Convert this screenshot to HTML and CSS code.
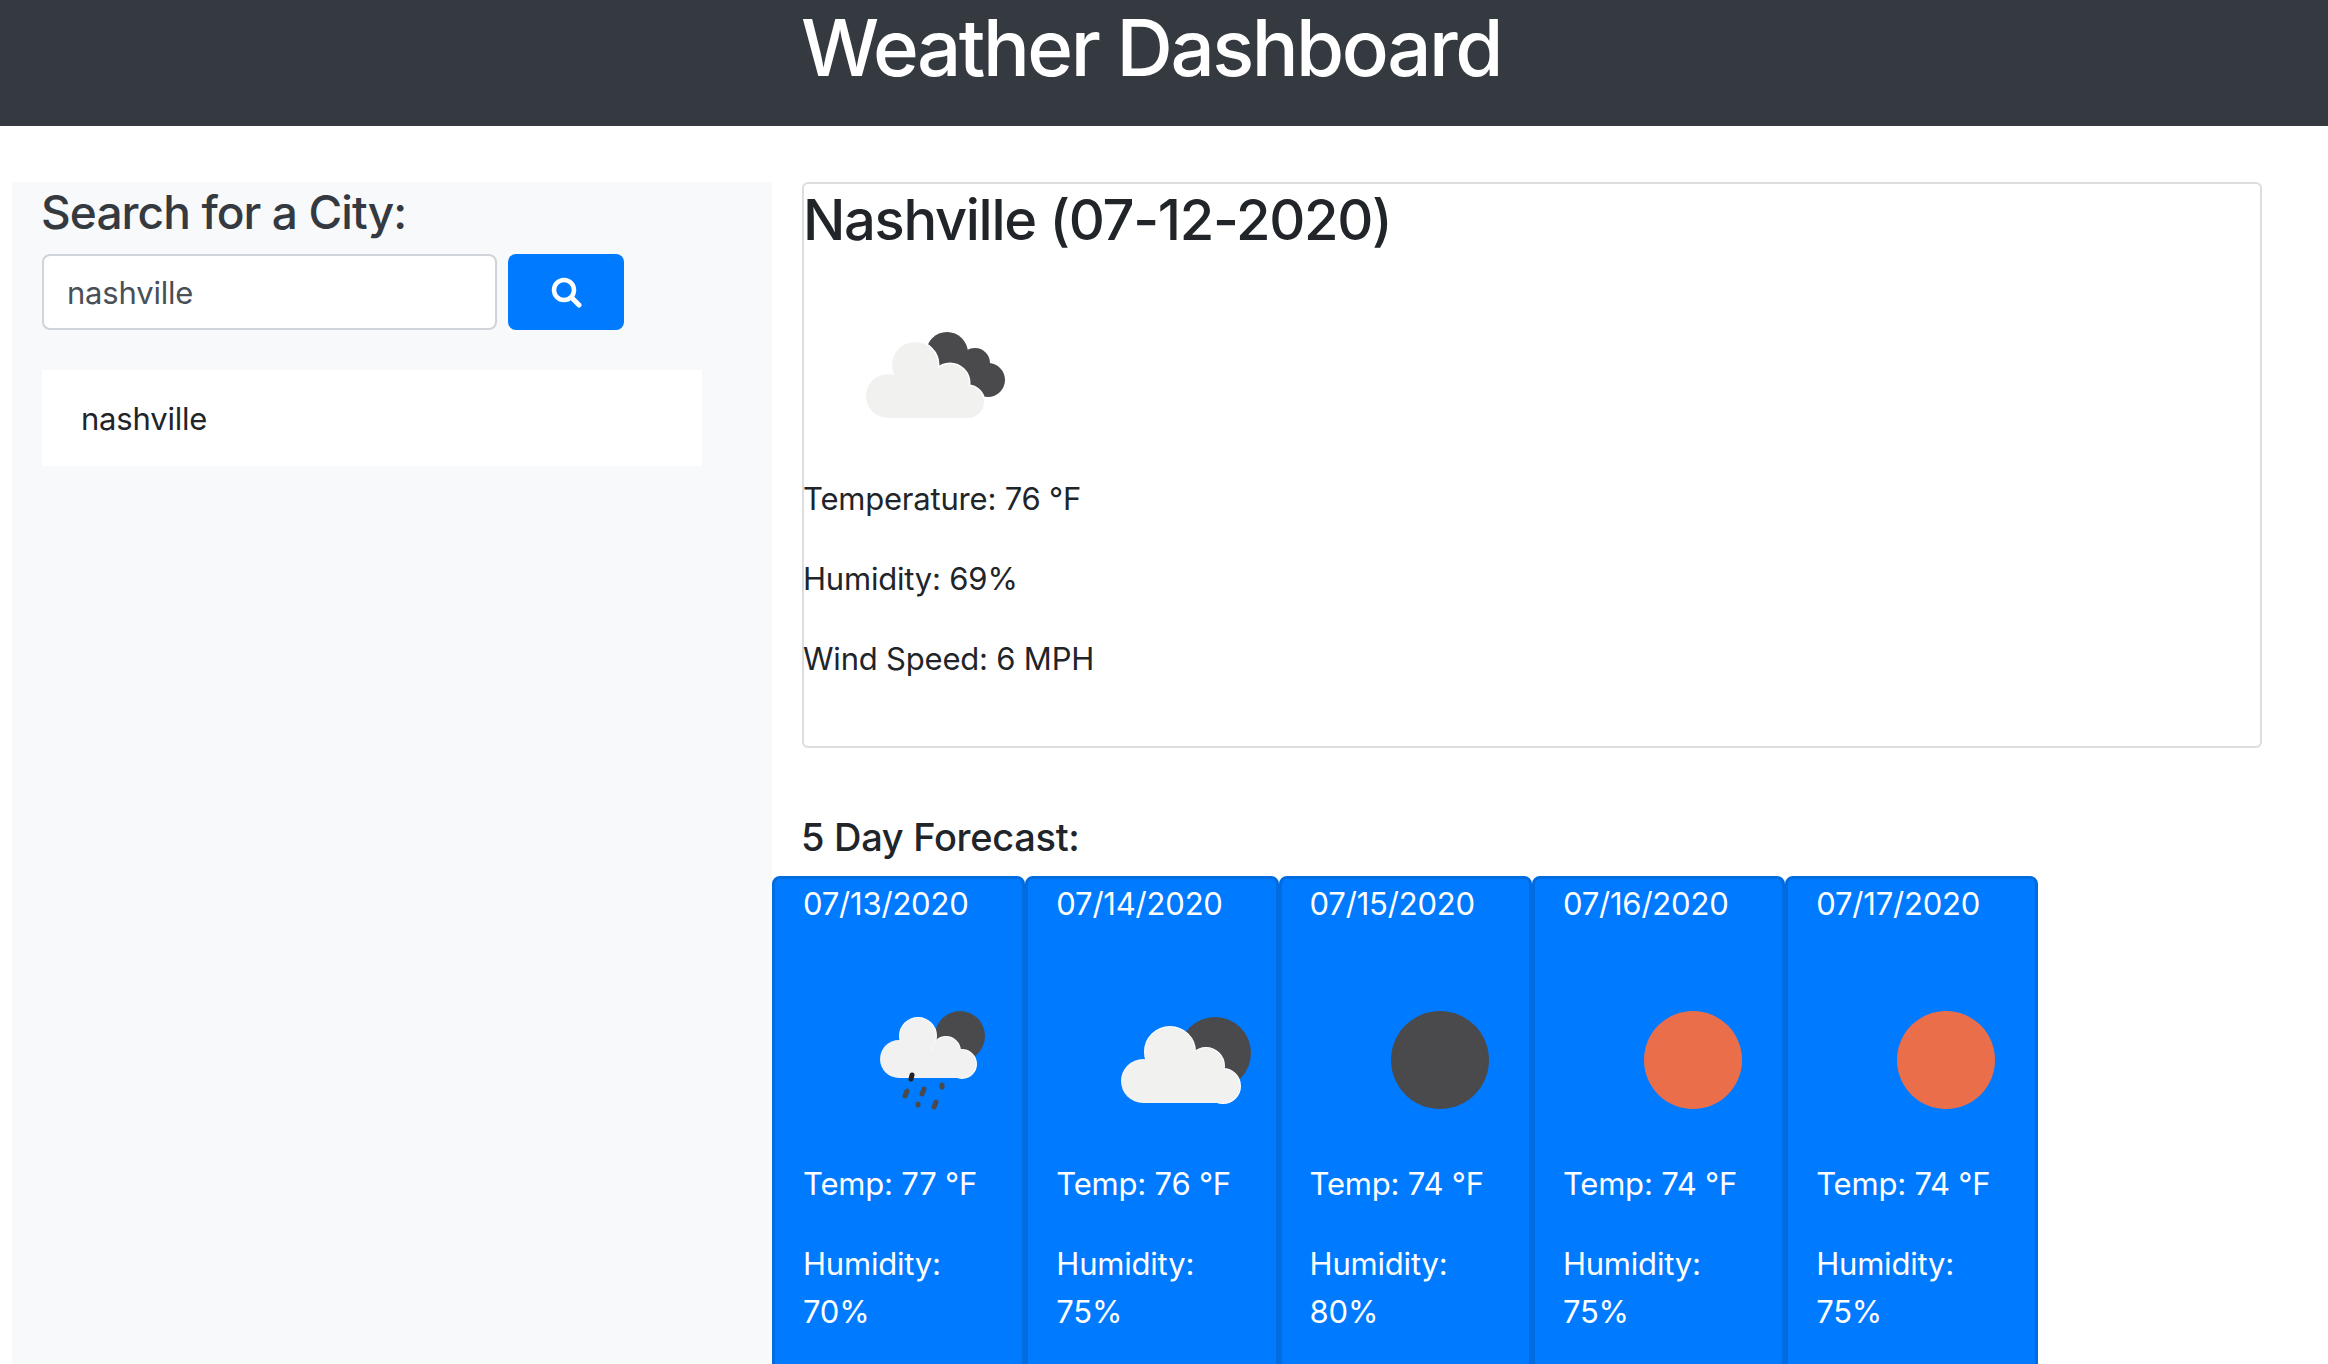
FILE: index.html
```html
<!DOCTYPE html>
<html lang="en">
<head>
  <meta charset="UTF-8" />
  <title>Weather Dashboard</title>
  <link rel="stylesheet" href="styles.css">
</head>
<body>

  <header class="topbar">
    <h1>Weather Dashboard</h1>
  </header>

  <div class="page">
    <aside class="sidebar">
      <h4>Search for a City:</h4>
      <div class="searchRow">
        <input class="cityInput" type="text" value="nashville" />
        <button class="searchBtn" aria-label="Search">
          <svg width="32" height="32" viewBox="0 0 32 32">
            <circle cx="14" cy="14" r="10" fill="none" stroke="#fff" stroke-width="4.5" />
            <line x1="21.5" y1="21.5" x2="29" y2="29" stroke="#fff" stroke-width="5" stroke-linecap="round" />
          </svg>
        </button>
      </div>
      <ul class="history">
        <li>nashville</li>
      </ul>
    </aside>

    <main class="content">
      <section class="current">
        <h2>Nashville (07-12-2020)</h2>
        <svg class="currentIcon" width="150" height="150" viewBox="0 0 150 150">
          <g fill="#4a4a4d">
            <circle cx="86" cy="53" r="21" />
            <circle cx="114" cy="63" r="15" />
            <circle cx="127" cy="80" r="17" />
            <rect x="86" y="55" width="32" height="30" />
            <rect x="100" y="70" width="25" height="25" />
          </g>
          <g fill="#fff" stroke="#fff" stroke-width="3">
            <circle cx="54" cy="65" r="23" />
            <circle cx="89" cy="83" r="19" />
            <circle cx="107" cy="102" r="16" />
          </g>
          <g fill="#f1f1f0">
            <circle cx="54" cy="65" r="23" />
            <circle cx="27" cy="96" r="22" />
            <circle cx="89" cy="83" r="19" />
            <circle cx="107" cy="102" r="16" />
            <rect x="27" y="84" width="80" height="34" />
            <rect x="50" y="70" width="40" height="20" />
          </g>
        </svg>
        <p>Temperature: 76 °F</p>
        <p>Humidity: 69%</p>
        <p>Wind Speed: 6 MPH</p>
      </section>

      <h5 class="forecastTitle">5 Day Forecast:</h5>
      <div class="forecast">

        <div class="dayCard">
          <p>07/13/2020</p>
          <svg class="dayIcon" width="150" height="150" viewBox="0 0 150 150">
            <circle cx="102" cy="51" r="25" fill="#4a4a4d" />
            <g fill="#fff" stroke="#fff" stroke-width="2">
              <circle cx="60" cy="51" r="18" />
              <circle cx="88" cy="66" r="14" />
              <circle cx="104" cy="79" r="14" />
            </g>
            <g fill="#f1f1f1">
              <circle cx="60" cy="51" r="18" />
              <circle cx="41" cy="74" r="19" />
              <circle cx="88" cy="66" r="14" />
              <circle cx="104" cy="79" r="14" />
              <rect x="41" y="64" width="63" height="29" />
            </g>
            <g stroke="#4a4a4d" stroke-width="5" stroke-linecap="round">
              <line x1="54" y1="90" x2="53" y2="94" stroke="#222" />
              <line x1="49" y1="106" x2="47" y2="111" />
              <line x1="66" y1="104" x2="64" y2="109" />
              <line x1="84" y1="100" x2="84" y2="102" />
              <line x1="60" y1="119" x2="60" y2="120" />
              <line x1="78" y1="117" x2="76" y2="122" />
            </g>
          </svg>
          <p>Temp: 77 °F</p>
          <p class="humidity">Humidity: 70%</p>
        </div>

        <div class="dayCard">
          <p>07/14/2020</p>
          <svg class="dayIcon" width="150" height="150" viewBox="0 0 150 150">
            <circle cx="104" cy="68" r="36" fill="#4a4a4d" />
            <g fill="#fff" stroke="#fff" stroke-width="2">
              <circle cx="59" cy="67" r="25" />
              <circle cx="95" cy="81" r="18" />
              <circle cx="112" cy="101" r="17" />
            </g>
            <g fill="#f1f1f0">
              <circle cx="59" cy="67" r="25" />
              <circle cx="32" cy="96" r="22" />
              <circle cx="95" cy="81" r="18" />
              <circle cx="112" cy="101" r="17" />
              <rect x="32" y="80" width="80" height="38" />
            </g>
          </svg>
          <p>Temp: 76 °F</p>
          <p class="humidity">Humidity: 75%</p>
        </div>

        <div class="dayCard">
          <p>07/15/2020</p>
          <svg class="dayIcon" width="150" height="150" viewBox="0 0 150 150">
            <circle cx="75" cy="75" r="49" fill="#4a4a4d" />
          </svg>
          <p>Temp: 74 °F</p>
          <p class="humidity">Humidity: 80%</p>
        </div>

        <div class="dayCard">
          <p>07/16/2020</p>
          <svg class="dayIcon" width="150" height="150" viewBox="0 0 150 150">
            <circle cx="75" cy="75" r="49" fill="#eb6e4b" />
          </svg>
          <p>Temp: 74 °F</p>
          <p class="humidity">Humidity: 75%</p>
        </div>

        <div class="dayCard">
          <p>07/17/2020</p>
          <svg class="dayIcon" width="150" height="150" viewBox="0 0 150 150">
            <circle cx="75" cy="75" r="49" fill="#eb6e4b" />
          </svg>
          <p>Temp: 74 °F</p>
          <p class="humidity">Humidity: 75%</p>
        </div>

      </div>
    </main>
  </div>

</body>
</html>
```

FILE: styles.css
```css
* {
  box-sizing: border-box;
}

html,
body {
  height: 100%;
}

body {
  margin: 0;
  overflow: hidden;
  font-family: Inter, "Liberation Sans", sans-serif;
  font-size: 31px;
  letter-spacing: -0.2px;
  line-height: 48px;
  color: #212529;
  background-color: #fff;
}

.topbar {
  height: 126px;
  background-color: #343a40;
  color: #fff;
  text-align: center;
}

.topbar h1 {
  margin: 0;
  padding-right: 26px;
  font-size: 78px;
  font-weight: 500;
  letter-spacing: -2.5px;
  line-height: 95px;
}

.page {
  display: flex;
  align-items: stretch;
  height: 1238px;
  padding: 56px 0 0 12px;
}

.sidebar {
  width: 760px;
  flex: none;
  padding: 0 70px 0 30px;
  background-color: #f8f9fa;
}

.sidebar h4 {
  margin: 0 0 14px -1px;
  padding-top: 1px;
  height: 58px;
  font-size: 46px;
  font-weight: 500;
  letter-spacing: -0.9px;
  line-height: 58px;
  color: #343a40;
}

.searchRow {
  display: flex;
  gap: 11px;
}

.cityInput {
  width: 455px;
  height: 76px;
  padding: 0 23px;
  border: 2px solid #ced4da;
  border-radius: 8px;
  font-family: inherit;
  font-size: 31px;
  letter-spacing: -0.2px;
  color: #495057;
  background-color: #fff;
}

.searchBtn {
  display: flex;
  align-items: center;
  justify-content: center;
  width: 116px;
  height: 76px;
  padding: 0;
  border: none;
  border-radius: 8px;
  background-color: #007bff;
}

.history {
  list-style-type: none;
  margin: 40px 0 0;
  padding: 0;
}

.history li {
  height: 96px;
  padding: 25px 39px 23px;
  background-color: #fff;
}

.content {
  flex: 1;
  min-width: 0;
  padding-right: 66px;
}

.current {
  margin-left: 30px;
  height: 566px;
  border: 2px solid #ddd;
  border-radius: 6px;
}

.current h2 {
  margin: 0 0 0 -1px;
  font-size: 56px;
  font-weight: 500;
  letter-spacing: -1.3px;
  line-height: 72px;
}

.current p {
  margin: 0 0 32px -1px;
}

.currentIcon {
  display: block;
  margin: 44px 0 25px 57px;
}

.forecastTitle {
  margin: 65px 0 15px 29px;
  font-size: 38px;
  font-weight: 500;
  letter-spacing: -0.3px;
  line-height: 48px;
}

.forecast {
  display: flex;
}

.dayCard {
  flex: none;
  width: 253.3px;
  height: 600px;
  padding: 1px 30px 0 28px;
  border: 3px solid #006cdf;
  border-radius: 8px;
  color: #fff;
  background-color: #007bff;
}

.dayCard p {
  margin: 0 0 32px;
}

.dayCard .humidity {
  width: 130px;
}

.dayIcon {
  display: block;
  margin: 57px 0 25px 55px;
}
```
